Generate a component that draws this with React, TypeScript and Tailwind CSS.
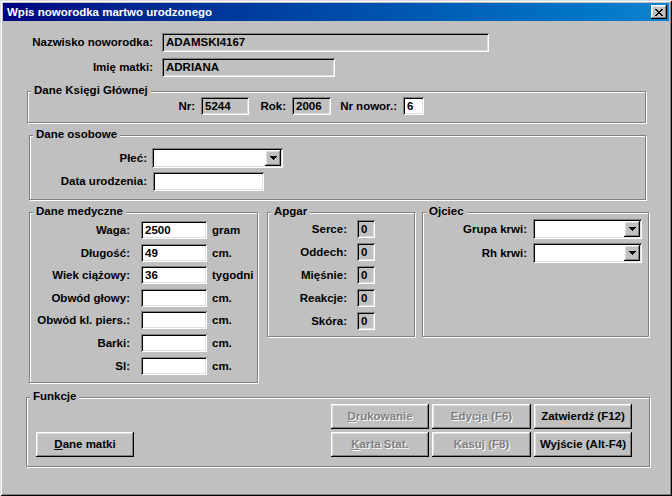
import React from "react";

const SUNKEN =
  "shadow-[inset_1px_1px_0_#808080,inset_-1px_-1px_0_#ffffff,inset_2px_2px_0_#000000,inset_-2px_-2px_0_#dfdfdf]";
const RAISED =
  "shadow-[inset_-1px_-1px_0_#000000,inset_1px_1px_0_#ffffff,inset_-2px_-2px_0_#808080,inset_2px_2px_0_#dfdfdf]";

function Group({
  label,
  className,
  children,
}: {
  label: string;
  className: string;
  children?: React.ReactNode;
}) {
  return (
    <div
      className={`relative border border-[#808080] shadow-[inset_1px_1px_0_#ffffff,1px_1px_0_#ffffff] ${className}`}
    >
      <span className="absolute top-[-8px] left-[3px] px-[3px] bg-[#c0c0c0] leading-[13px] whitespace-nowrap">
        {label}
      </span>
      {children}
    </div>
  );
}

function Field({
  value,
  className,
  white,
}: {
  value?: string;
  className: string;
  white?: boolean;
}) {
  return (
    <div
      className={`${SUNKEN} ${white ? "bg-white" : "bg-[#c0c0c0]"} flex items-center pl-[4px] whitespace-nowrap overflow-hidden ${className}`}
    >
      {value}
    </div>
  );
}

function DownArrow() {
  return (
    <svg width="7" height="4" viewBox="0 0 7 4" shapeRendering="crispEdges">
      <rect x="0" y="0" width="7" height="1" fill="#000" />
      <rect x="1" y="1" width="5" height="1" fill="#000" />
      <rect x="2" y="2" width="3" height="1" fill="#000" />
      <rect x="3" y="3" width="1" height="1" fill="#000" />
    </svg>
  );
}

function Combo({ className }: { className: string }) {
  return (
    <div className={`${SUNKEN} bg-white flex justify-end p-[2px] ${className}`}>
      <div
        className={`${RAISED} bg-[#c0c0c0] w-[16px] h-full flex items-center justify-center`}
      >
        <DownArrow />
      </div>
    </div>
  );
}

function CloseGlyph() {
  const rows = [
    [0, 1, 6, 7],
    [1, 2, 5, 6],
    [2, 3, 4, 5],
    [3, 4],
    [2, 3, 4, 5],
    [1, 2, 5, 6],
    [0, 1, 6, 7],
  ];
  return (
    <svg width="8" height="7" viewBox="0 0 8 7" shapeRendering="crispEdges">
      {rows.map((r, y) =>
        r.map((x) => <rect key={`${x}-${y}`} x={x} y={y} width="1" height="1" fill="#000" />)
      )}
    </svg>
  );
}

function Btn({
  children,
  disabled,
  className,
}: {
  children: React.ReactNode;
  disabled?: boolean;
  className?: string;
}) {
  return (
    <div
      className={`${RAISED} bg-[#c0c0c0] w-full h-[25px] flex items-center justify-center whitespace-nowrap ${
        disabled ? "text-[#808080] [text-shadow:1px_1px_0_#ffffff]" : "text-black"
      } ${className ?? ""}`}
    >
      {children}
    </div>
  );
}

function LabeledRow({
  label,
  labelW,
  children,
  className,
}: {
  label: string;
  labelW: string;
  children: React.ReactNode;
  className?: string;
}) {
  return (
    <div className={`flex items-center ${className ?? ""}`}>
      <span className={`${labelW} text-right whitespace-nowrap shrink-0`}>{label}</span>
      {children}
    </div>
  );
}

export default function App() {
  const med: [string, string, string, string][] = [
    ["Waga:", "2500", "gram", ""],
    ["Długość:", "49", "cm.", "mt-[5px]"],
    ["Wiek ciążowy:", "36", "tygodni", "mt-[4px]"],
    ["Obwód głowy:", "", "cm.", "mt-[5px]"],
    ["Obwód kl. piers.:", "", "cm.", "mt-[4px]"],
    ["Barki:", "", "cm.", "mt-[5px]"],
    ["Sl:", "", "cm.", "mt-[5px]"],
  ];
  const apgar = ["Serce:", "Oddech:", "Mięśnie:", "Reakcje:", "Skóra:"];

  return (
    <div className="w-[672px] h-[496px] bg-[#c0c0c0] p-[3px] shadow-[inset_1px_1px_0_#dfdfdf,inset_-1px_-1px_0_#000000,inset_2px_2px_0_#ffffff,inset_-2px_-2px_0_#808080] font-['Liberation_Sans',Arial,sans-serif] text-[11.5px] font-bold leading-[13px] text-black flex flex-col overflow-hidden select-none">
      {/* Title bar */}
      <div className="h-[18px] shrink-0 bg-linear-to-r from-[#000080] to-[#1084d0] flex items-center pl-[4px] pr-[2px]">
        <span className="text-white whitespace-nowrap">Wpis noworodka martwo urodzonego</span>
        <div className={`${RAISED} ml-auto w-[16px] h-[14px] bg-[#c0c0c0] flex items-center justify-center`}>
          <CloseGlyph />
        </div>
      </div>

      {/* Body */}
      <div className="flex flex-col">
        <LabeledRow label="Nazwisko noworodka:" labelW="w-[150px]" className="mt-[12px]">
          <Field value="ADAMSKI4167" className="ml-[9px] w-[327px] h-[19px]" />
        </LabeledRow>
        <LabeledRow label="Imię matki:" labelW="w-[150px]" className="mt-[6px]">
          <Field value="ADRIANA" className="ml-[9px] w-[173px] h-[19px]" />
        </LabeledRow>

        <Group label="Dane Księgi Głównej" className="ml-[24px] mt-[14px] w-[619px] h-[32px] pt-[5px]">
          <div className="flex items-center">
            <span className="w-[167px] text-right shrink-0">Nr:</span>
            <Field value="5244" className="ml-[6px] w-[48px] h-[18px]" />
            <span className="w-[37px] text-right shrink-0">Rok:</span>
            <Field value="2006" className="ml-[6px] w-[39px] h-[18px]" />
            <span className="w-[66px] text-right shrink-0 whitespace-nowrap">Nr nowor.:</span>
            <Field value="6" white className="ml-[6px] w-[21px] h-[18px] pl-[3px]" />
          </div>
        </Group>

        <Group label="Dane osobowe" className="ml-[26px] mt-[12px] w-[617px] h-[65px] pt-[12px] flex flex-col">
          <LabeledRow label="Płeć:" labelW="w-[117px]">
            <Combo className="ml-[5px] w-[131px] h-[20px]" />
          </LabeledRow>
          <LabeledRow label="Data urodzenia:" labelW="w-[117px]" className="mt-[4px]">
            <Field white className="ml-[6px] w-[111px] h-[19px]" />
          </LabeledRow>
        </Group>

        <div className="mt-[12px] flex items-start">
          <Group label="Dane medyczne" className="ml-[26px] w-[229px] h-[171px] pt-[8px] flex flex-col">
            {med.map(([l, v, u, m]) => (
              <LabeledRow key={l} label={l} labelW="w-[100px]" className={m}>
                <Field value={v} white className="ml-[11px] w-[66px] h-[18px]" />
                <span className="ml-[5px] whitespace-nowrap">{u}</span>
              </LabeledRow>
            ))}
          </Group>

          <Group label="Apgar" className="ml-[9px] w-[148px] h-[125px] pt-[7px] flex flex-col gap-[5px]">
            {apgar.map((l) => (
              <LabeledRow key={l} label={l} labelW="w-[79px]">
                <Field value="0" className="ml-[10px] w-[18px] h-[18px] pl-[3px]" />
              </LabeledRow>
            ))}
          </Group>

          <Group label="Ojciec" className="ml-[7px] w-[227px] h-[125px] pt-[6px] flex flex-col gap-[4px]">
            <LabeledRow label="Grupa krwi:" labelW="w-[104px]">
              <Combo className="ml-[6px] w-[109px] h-[20px]" />
            </LabeledRow>
            <LabeledRow label="Rh krwi:" labelW="w-[104px]">
              <Combo className="ml-[6px] w-[109px] h-[20px]" />
            </LabeledRow>
          </Group>
        </div>

        <Group label="Funkcje" className="ml-[23px] mt-[14px] w-[624px] h-[70px] pt-[6px] flex items-start">
          <div className="ml-[9px] mt-[28px] w-[98px]">
            <Btn>
              <span className="underline">D</span>ane matki
            </Btn>
          </div>
          <div className="ml-[197px] grid grid-cols-[98px_99px_98px] gap-[3px]">
            <Btn disabled>
              <span className="underline">D</span>rukowanie
            </Btn>
            <Btn disabled>Edycja (F6)</Btn>
            <Btn>Zatwierdź (F12)</Btn>
            <Btn disabled>
              <span className="underline">K</span>arta Stat.
            </Btn>
            <Btn disabled>Kasuj (F8)</Btn>
            <Btn>Wyjście (Alt-F4)</Btn>
          </div>
        </Group>
      </div>
    </div>
  );
}
